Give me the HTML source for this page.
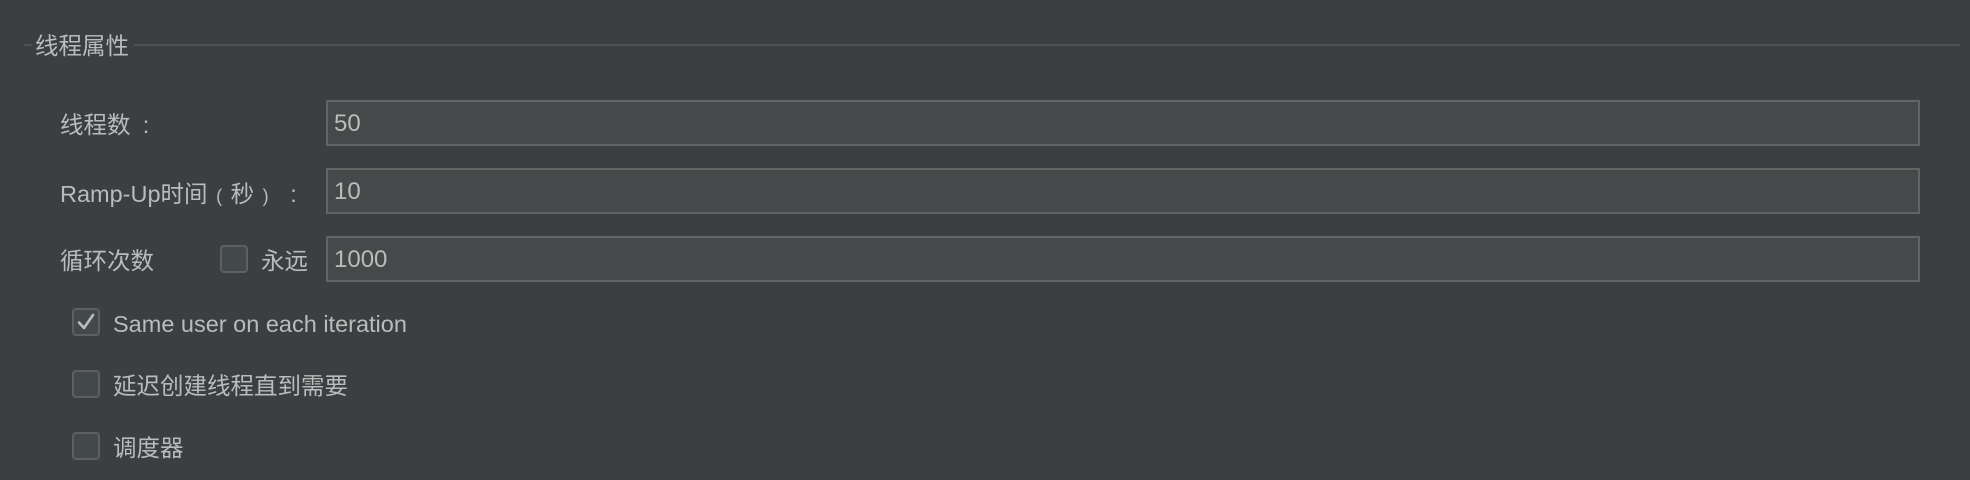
<!DOCTYPE html>
<html><head><meta charset="utf-8"><style>
html,body{margin:0;padding:0;}
body{width:1970px;height:480px;background:#3c3f41;position:relative;overflow:hidden;font-family:"Liberation Sans","Noto Sans CJK SC",sans-serif;color:#bbbbbb;font-size:23.5px;}
.abs{position:absolute;white-space:nowrap;}
.line{position:absolute;height:2px;background:#515151;top:44px;}
.field{position:absolute;left:326px;width:1590px;height:42px;border:2px solid #646464;background:#45494a;}
.field span{position:absolute;left:6px;top:8px;font-size:24px;}
.cb{position:absolute;width:24px;height:24px;border:2px solid #5e6060;border-radius:4px;background:#43494a;}
.lbl{line-height:26px;}
.p{display:inline-block;width:23px;text-align:center;}
</style></head><body>
<div class="line" style="left:24px;width:8px"></div>
<div class="abs lbl" style="left:35px;top:33px;">线程属性</div>
<div class="line" style="left:134px;width:1826px"></div>

<div class="abs lbl" style="left:60px;top:112px">线程数<span class="p" style="margin-left:4px">:</span></div>
<div class="field" style="top:100px"><span>50</span></div>

<div class="abs lbl" style="left:60px;top:181px">Ramp-Up时间<span class="p" style="font-size:18px">(</span>秒<span class="p" style="font-size:18px">)</span><span class="p" style="margin-left:5px">:</span></div>
<div class="field" style="top:168px"><span>10</span></div>

<div class="abs lbl" style="left:60px;top:248px">循环次数</div>
<div class="cb" style="left:220px;top:245px"></div>
<div class="abs lbl" style="left:261px;top:248px">永远</div>
<div class="field" style="top:236px"><span>1000</span></div>

<div class="cb" style="left:72px;top:308px"><svg width="24" height="24" viewBox="0 0 24 24" style="position:absolute;left:0;top:0"><path d="M5 12.5 L10 18 L19 5" fill="none" stroke="#bbbbbb" stroke-width="2.6" stroke-linecap="round" stroke-linejoin="round"/></svg></div>
<div class="abs lbl" style="left:113px;top:311px;font-size:23.5px;letter-spacing:0">Same user on each iteration</div>

<div class="cb" style="left:72px;top:370px"></div>
<div class="abs lbl" style="left:113px;top:373px">延迟创建线程直到需要</div>

<div class="cb" style="left:72px;top:432px"></div>
<div class="abs lbl" style="left:113px;top:435px">调度器</div>
</body></html>
